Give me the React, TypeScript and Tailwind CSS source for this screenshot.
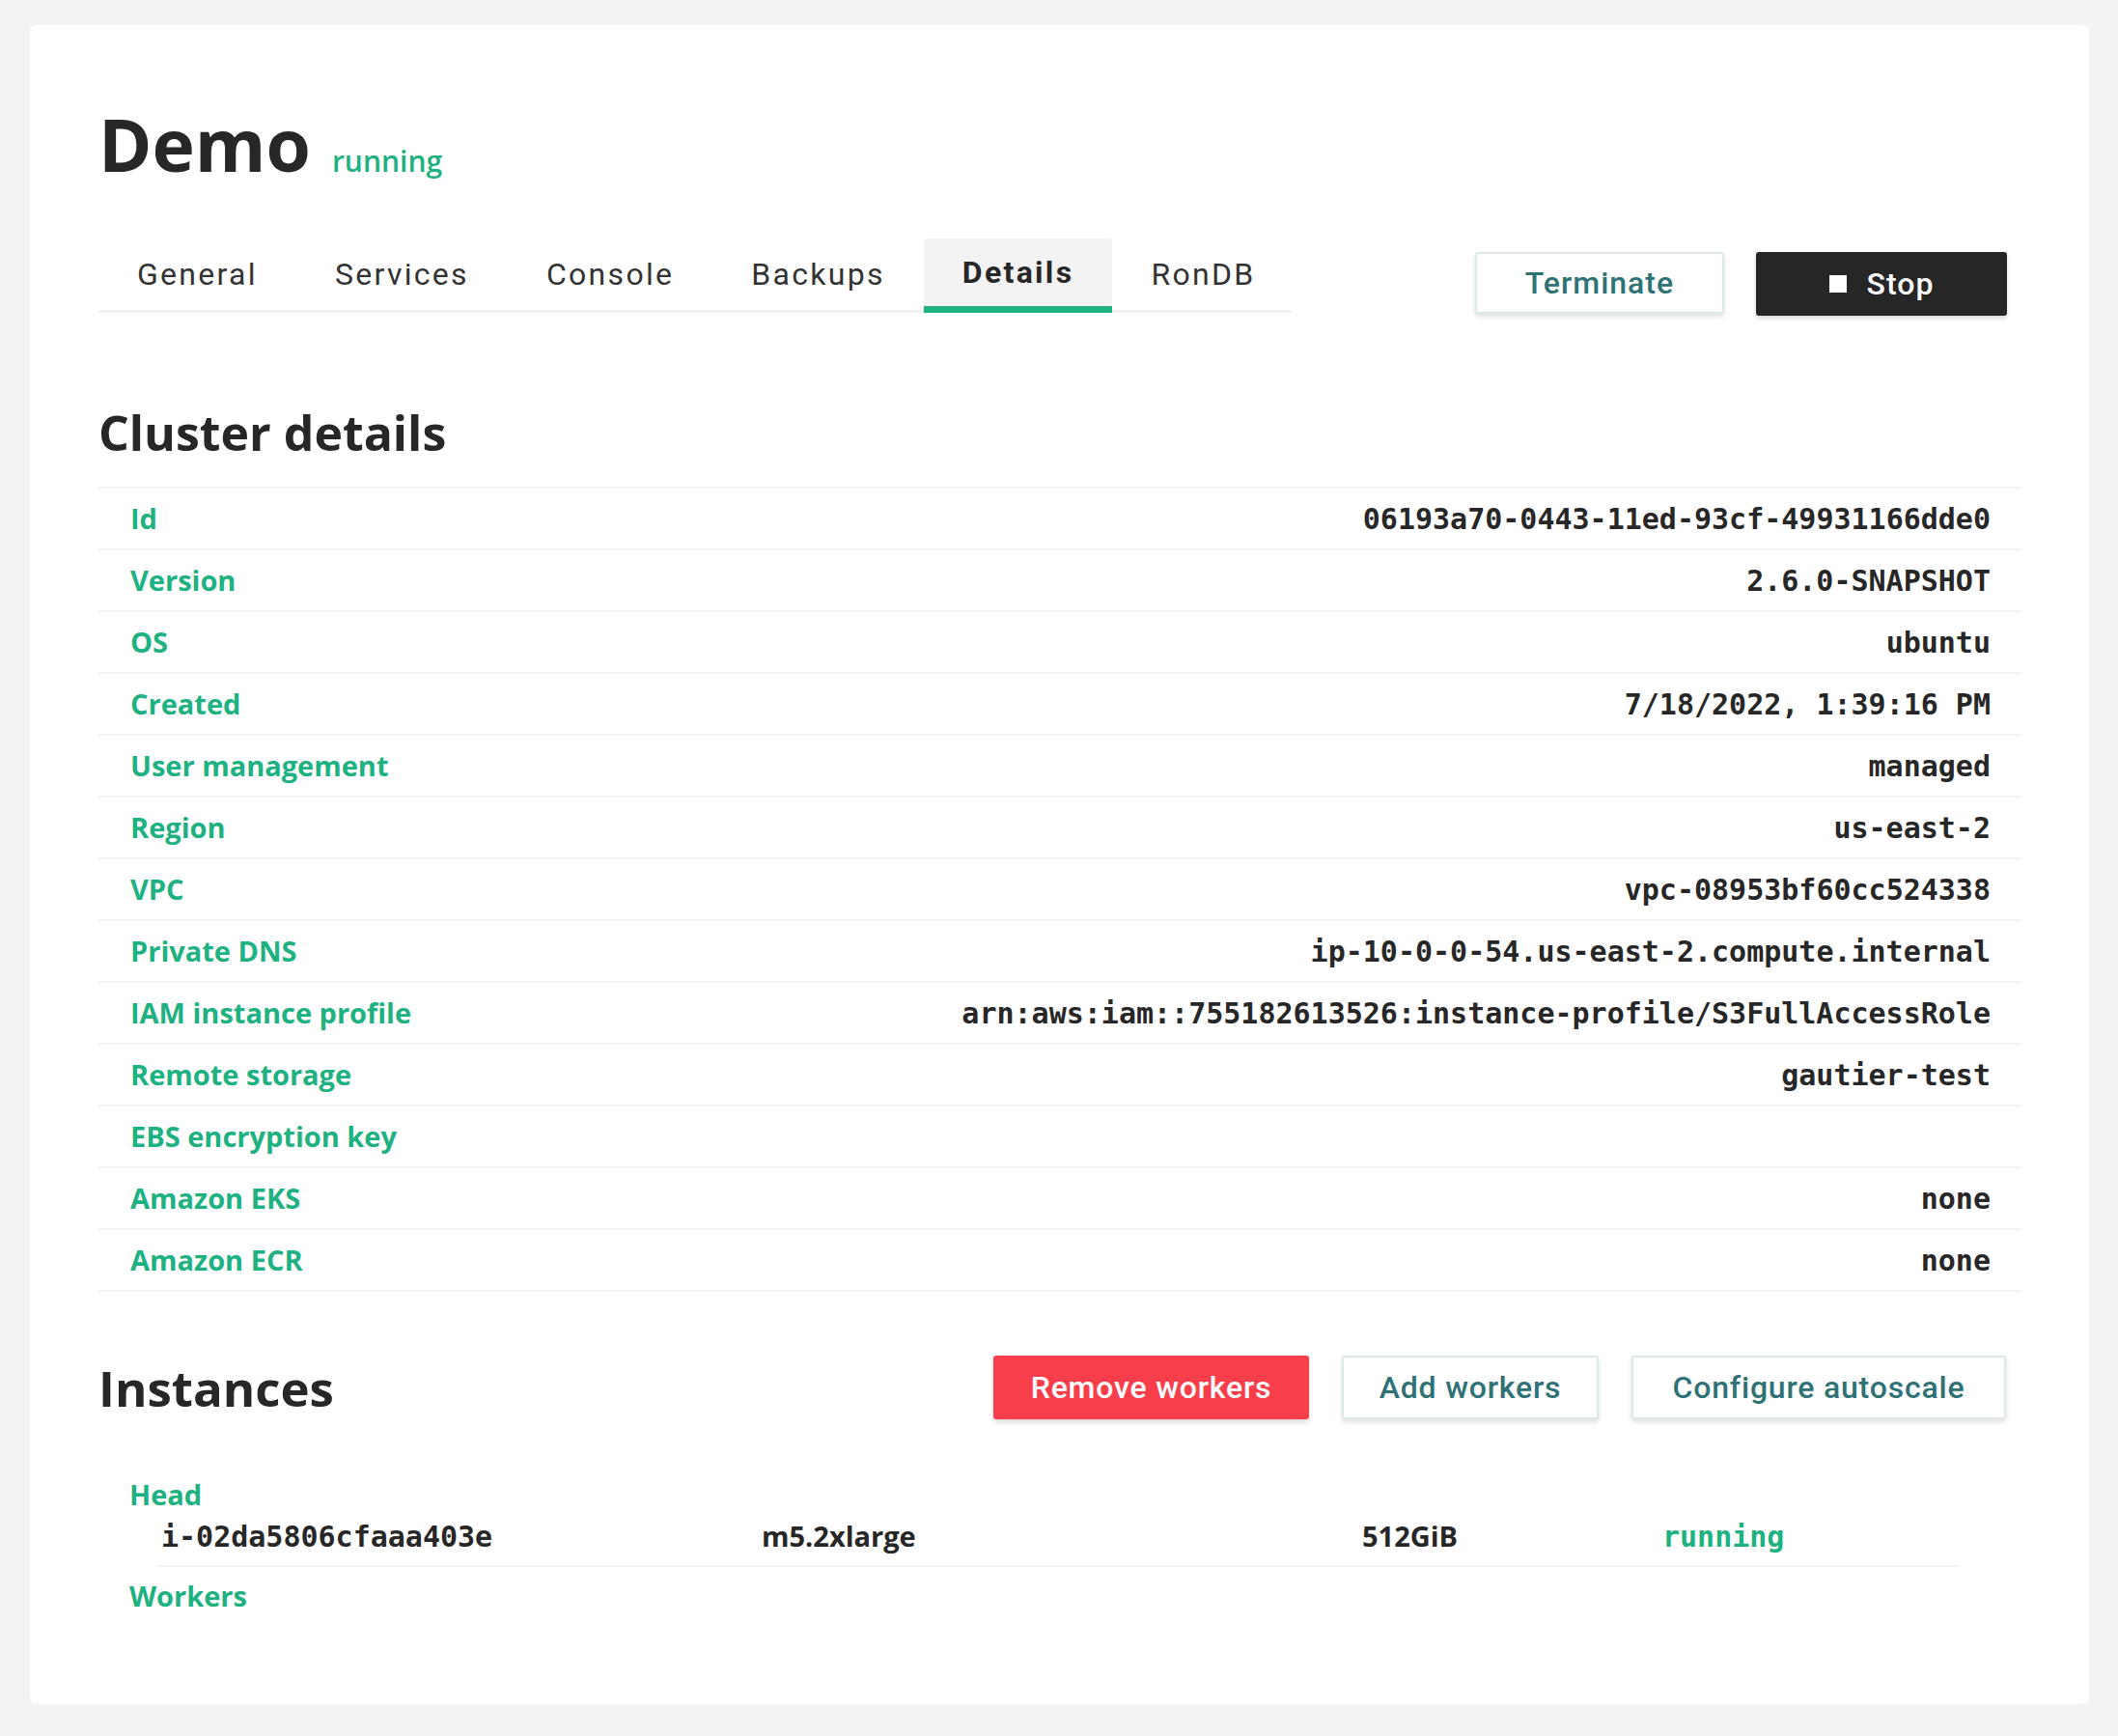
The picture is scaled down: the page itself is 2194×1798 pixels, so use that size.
import React from "react";

const rows: [string, string][] = [
  ["Id", "06193a70-0443-11ed-93cf-49931166dde0"],
  ["Version", "2.6.0-SNAPSHOT"],
  ["OS", "ubuntu"],
  ["Created", "7/18/2022, 1:39:16 PM"],
  ["User management", "managed"],
  ["Region", "us-east-2"],
  ["VPC", "vpc-08953bf60cc524338"],
  ["Private DNS", "ip-10-0-0-54.us-east-2.compute.internal"],
  ["IAM instance profile", "arn:aws:iam::755182613526:instance-profile/S3FullAccessRole"],
  ["Remote storage", "gautier-test"],
  ["EBS encryption key", ""],
  ["Amazon EKS", "none"],
  ["Amazon ECR", "none"],
];

const tabs = ["General", "Services", "Console", "Backups", "Details", "RonDB"];

export default function App() {
  return (
    <div className="min-h-screen bg-[#f3f3f3] pt-[26px] pl-[31px] pr-[30px] pb-[35px]">
      <div className="bg-white rounded-[6px] pl-[71px] pr-[69px] pt-[86px] pb-[94px]">
        {/* Title */}
        <div className="flex items-baseline gap-[22px]">
          <h1 className="font-['Open_Sans',sans-serif] font-bold text-[75px] leading-[75px] text-[#272727]">
            Demo
          </h1>
          <span className="font-['Open_Sans',sans-serif] font-semibold text-[30px] text-[#1eb182]">
            running
          </span>
        </div>

        {/* Tabs + actions */}
        <div className="mt-[58px] flex items-start justify-between">
          <div className="flex border-b-[3px] border-[#f1f1f1] w-[1236px]">
            {tabs.map((t) =>
              t === "Details" ? (
                <div
                  key={t}
                  className="h-[77px] -mb-[3px] px-10 flex items-center bg-[#f3f3f3] rounded-t-[3px] border-b-[7px] border-[#1eb182] font-['Roboto',sans-serif] font-bold text-[32px] tracking-[2.3px] text-[#272727]"
                >
                  {t}
                </div>
              ) : (
                <div
                  key={t}
                  className="h-[74px] px-10 flex items-center font-['Roboto',sans-serif] text-[32px] tracking-[2.3px] text-[#333]"
                >
                  {t}
                </div>
              )
            )}
          </div>
          <div className="mt-[14px] mr-[16px] flex gap-[33px]">
            <button className="w-[258px] h-[64px] rounded-[3px] border-2 border-[#dde8e8] bg-white shadow-[0_3px_5px_rgba(0,0,0,0.12)] font-['Roboto',sans-serif] font-medium text-[32px] tracking-[1px] text-[#2e7276]">
              Terminate
            </button>
            <button className="w-[260px] h-[66px] rounded-[3px] bg-[#262626] shadow-[0_3px_5px_rgba(0,0,0,0.15)] flex items-center justify-center gap-[21px] font-['Roboto',sans-serif] font-medium text-[32px] tracking-[1px] text-white">
              <span className="w-[18px] h-[18px] bg-white inline-block" />
              Stop
            </button>
          </div>
        </div>

        {/* Cluster details */}
        <h2 className="mt-[95px] font-['Open_Sans',sans-serif] font-bold text-[50px] leading-[52px] text-[#272727]">
          Cluster details
        </h2>
        <div className="mt-[30px] border-b-2 border-[#f3f3f3]">
          {rows.map(([k, v]) => (
            <div
              key={k}
              className="h-[64px] border-t-2 border-[#f3f3f3] flex items-center justify-between pl-[33px] pr-[33px]"
            >
              <span className="font-['Open_Sans',sans-serif] font-bold text-[29px] text-[#1eb182]">
                {k}
              </span>
              <span className="font-['DejaVu_Sans_Mono',monospace] font-bold text-[30px] text-[#272727]">
                {v}
              </span>
            </div>
          ))}
        </div>

        {/* Instances */}
        <div className="mt-[65px] h-[67px] flex items-center justify-between pr-[17px]">
          <h2 className="font-['Open_Sans',sans-serif] font-bold text-[51px] leading-[52px] text-[#272727]">
            Instances
          </h2>
          <div className="flex gap-[34px]">
            <button className="w-[327px] h-[66px] rounded-[3px] bg-[#f83e4b] shadow-[0_3px_5px_rgba(0,0,0,0.15)] font-['Roboto',sans-serif] font-medium text-[32px] tracking-[0.8px] text-white">
              Remove workers
            </button>
            <button className="w-[266px] h-[66px] rounded-[3px] border-2 border-[#dde8e8] bg-white shadow-[0_3px_5px_rgba(0,0,0,0.12)] font-['Roboto',sans-serif] font-medium text-[32px] tracking-[0.8px] text-[#2e7276]">
              Add workers
            </button>
            <button className="w-[388px] h-[66px] rounded-[3px] border-2 border-[#dde8e8] bg-white shadow-[0_3px_5px_rgba(0,0,0,0.12)] font-['Roboto',sans-serif] font-medium text-[32px] tracking-[0.8px] text-[#2e7276]">
              Configure autoscale
            </button>
          </div>
        </div>

        <div className="px-8 mt-[60px]">
          <div className="font-['Open_Sans',sans-serif] font-bold text-[29px] leading-[36px] text-[#1eb182]">
            Head
          </div>
          <div className="ml-[30px] mr-[33px] mt-[7px] pb-[11px] border-b-2 border-[#f3f3f3] grid grid-cols-[2fr_2fr_1fr_1fr] items-baseline leading-[36px]">
            <span className="pl-[3px] font-['DejaVu_Sans_Mono',monospace] font-bold text-[30px] text-[#272727]">
              i-02da5806cfaaa403e
            </span>
            <span className="pl-[3px] font-['Open_Sans',sans-serif] font-bold text-[29px] text-[#272727]">
              m5.2xlarge
            </span>
            <span className="pl-[3px] font-['Open_Sans',sans-serif] font-bold text-[29px] text-[#272727]">
              512GiB
            </span>
            <span className="pl-[3px] font-['DejaVu_Sans_Mono',monospace] font-bold text-[30px] text-[#1eb182]">
              running
            </span>
          </div>
          <div className="mt-[12px] font-['Open_Sans',sans-serif] font-bold text-[29px] leading-[36px] text-[#1eb182]">
            Workers
          </div>
        </div>
      </div>
    </div>
  );
}
